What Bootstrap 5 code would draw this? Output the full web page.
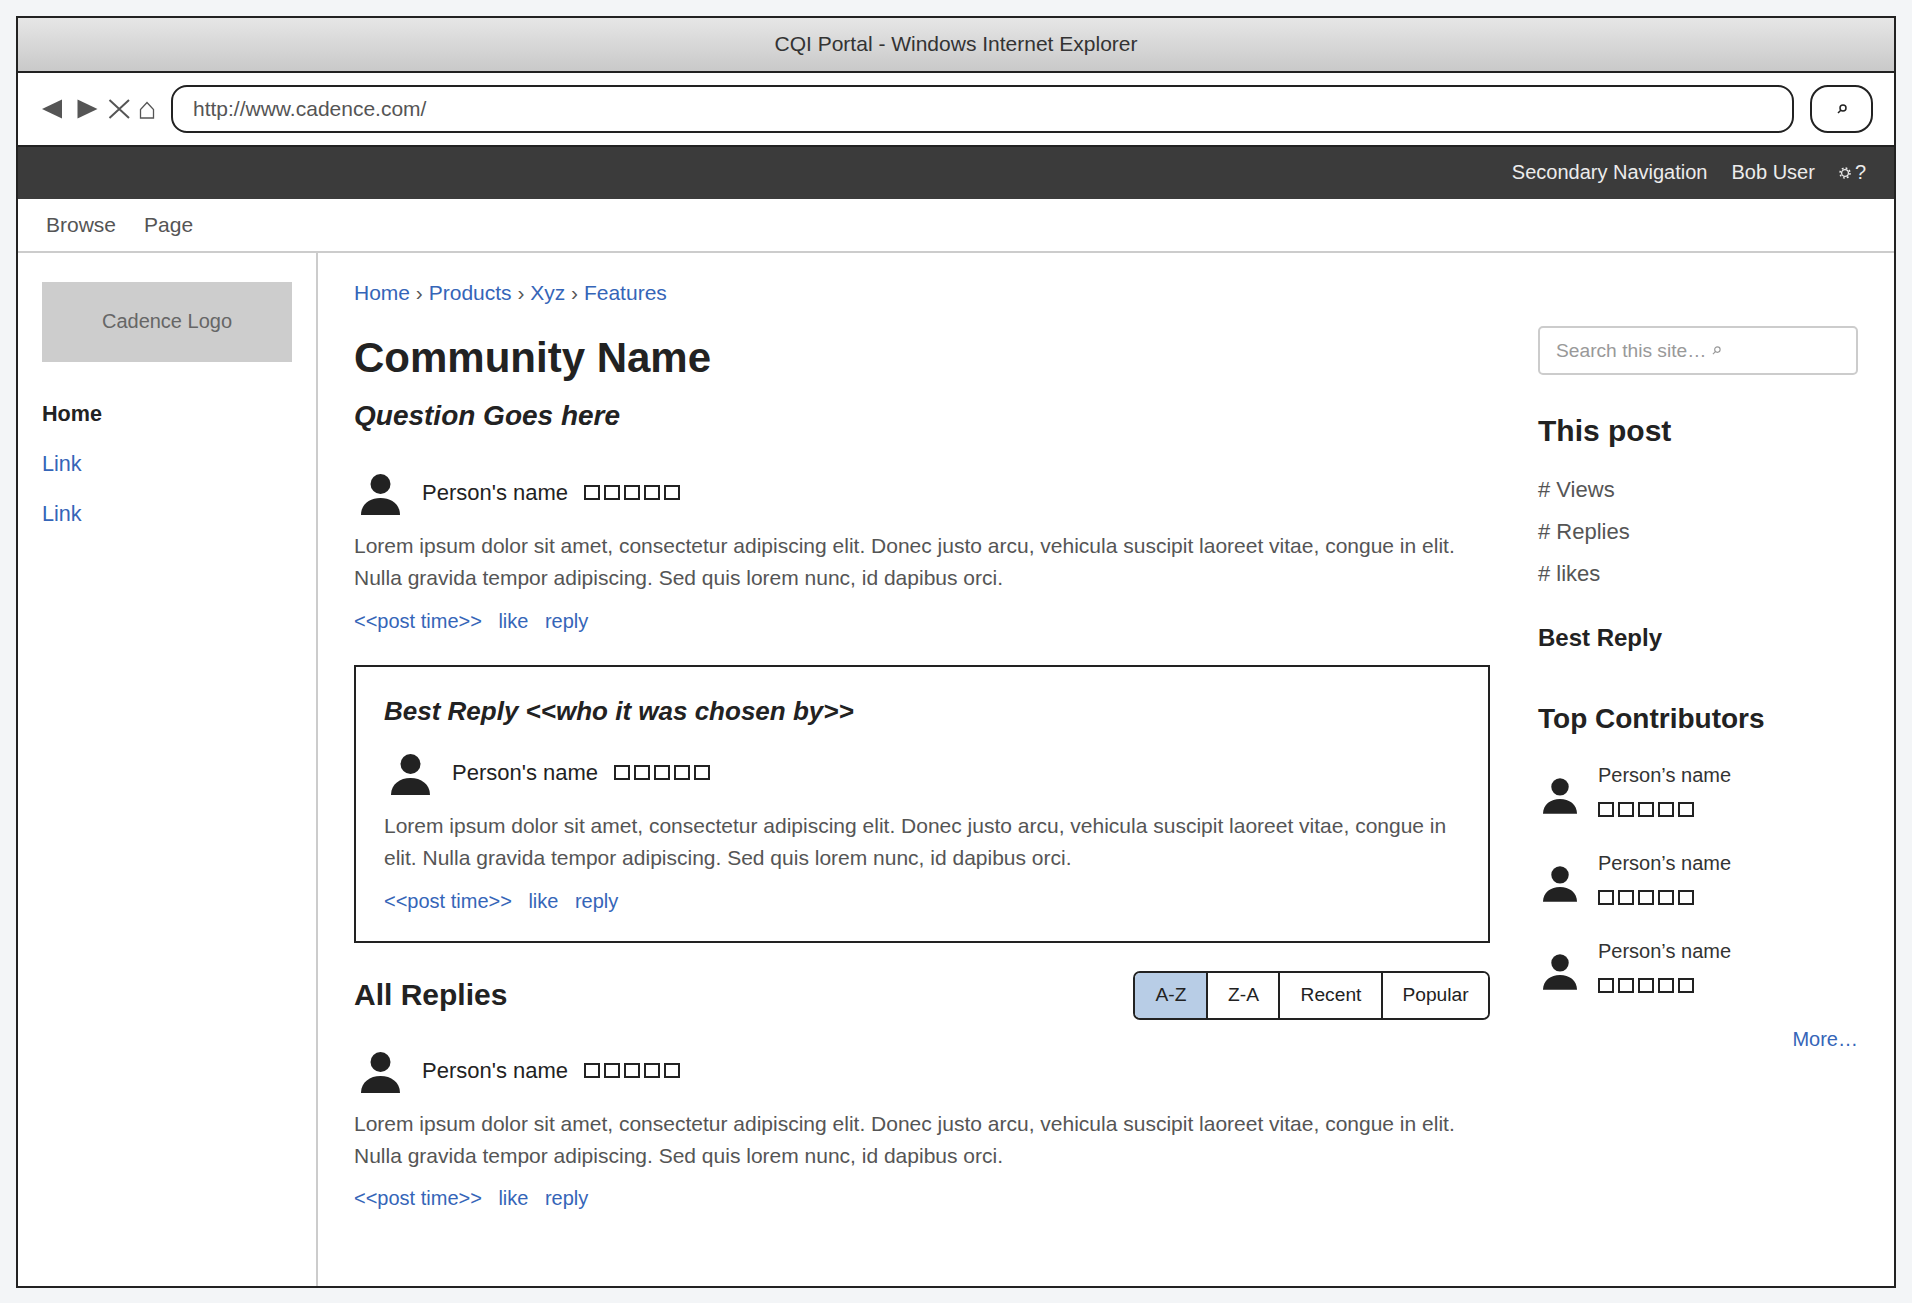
<!DOCTYPE html>
<html lang="en">
<head>
  <meta charset="UTF-8">
  <meta name="viewport" content="width=device-width, initial-scale=1.0">
  <title>CQI Portal</title>
  <link href="https://cdn.jsdelivr.net/npm/bootstrap@5.3.0/dist/css/bootstrap.min.css" rel="stylesheet">
  <style>
    body { background: #f3f5f7; font-family: "Liberation Sans", Arial, sans-serif; font-size: 21px; color: #555; padding: 16px 16px 0 16px; line-height: 31.5px; }
    a { color: #3565b8; text-decoration: none; }
    .wire-frame { height: 1272px; border: 2px solid #222; background: #fff; }
    .title-bar { height: 55px; border-bottom: 2px solid #222; background: linear-gradient(#e6e6e6, #c9c9c9); color: #333; padding-bottom: 2px; }
    .tool-bar { height: 74px; border-bottom: 2px solid #222; padding: 0 21px 0 24px; }
    .tool-icons { width: 129px; }
    .url-box { height: 48px; border: 2.5px solid #222; border-radius: 16px; padding-left: 20px; line-height: 43px; margin-top: -1px; }
    .go-btn { width: 63px; height: 48px; border: 2.5px solid #222; border-radius: 18px; margin-left: 16px; margin-top: -1px; }
    .dark-bar { height: 52px; background: #3b3b3b; color: #ececec; padding-right: 28px; font-size: 20px; padding-bottom: 1px; }
    .menu-bar { height: 54px; border-bottom: 2px solid #ccc; padding-left: 28px; gap: 28px; padding-bottom: 1px; }
    .menu-bar span { color: #555; }
    .left-col { width: 300px; border-right: 2px solid #ccc; padding: 29px 24px 0 24px; }
    .logo-box { height: 80px; background: #cdcdcd; color: #666; font-size: 20px; }
    .left-links { margin-top: 36px; font-size: 21.6px; }
    .left-links div { height: 50px; line-height: 31.5px; }
    .left-links b { color: #222; }
    .mid-col { width: 1136px; margin-left: 36px; padding-top: 24px; }
    .comm-title { font-size: 42px; font-weight: 700; line-height: 50px; margin: 24px 0 0 0; color: #222; }
    .q-title { font-size: 28px; font-weight: 700; font-style: italic; line-height: 34px; margin: 16px 0 0 0; color: #222; }
    .who-row { height: 40px; margin-top: 40px; color: #222; font-size: 22px; }
    .who-row svg { width: 39px; height: 41px; margin: 3px 22px 0 7px; fill: #222; }
    .boxes { display: inline-flex; gap: 4.5px; margin-left: 16px; }
    .boxes i { display: block; width: 15.5px; height: 15.5px; border: 2.5px solid #222; }
    .post-text { margin: 17px 0 0 0; line-height: 32px; }
    .post-links { margin-top: 12px; font-size: 20px; line-height: 30px; gap: 16.5px; }
    .mid-col > .post-links:last-child { margin-top: 11px; }
    .best-box { border: 2px solid #222; margin-top: 29px; padding: 27px 28px 24px 28px; height: 278px; }
    .best-box .q-title { margin: 0; font-size: 26px; }
    .best-box .who-row { margin-top: 25px; }
    .replies-head { margin-top: 28px; height: 49px; }
    .replies-head h2 { font-size: 30px; font-weight: 700; margin: 0; color: #222; }
    .sort-group { height: 49px; border: 2.5px solid #222; border-radius: 7px; overflow: hidden; }
    .sort-group .btn { border: 0; border-left: 2.5px solid #222; border-radius: 0; font-size: 19.2px; color: #222; padding: 0; background: #fff; line-height: 44px; }
    .sort-group .btn:first-child { border-left: 0; background: #b8cde6; width: 72px; }
    .sort-group .w-za { width: 73px; }
    .sort-group .w-rec { width: 104px; }
    .sort-group .w-pop { width: 107px; }
    .replies-head + .who-row { margin-top: 31px; }
    .right-col { width: 320px; margin-left: 48px; padding-top: 73px; }
    .site-search { height: 49px; border: 2.5px solid #ccc; border-radius: 5px; padding: 0 0 0 16px; color: #999; font-size: 19.2px; gap: 6px; }
    .side-h { font-size: 30px; font-weight: 700; color: #222; line-height: 36px; margin: 38px 0 0 0; }
    .side-h-top { font-size: 28px; margin-top: 48px; }
    .stat-list { margin-top: 25px; }
    .stat-line { height: 42px; font-size: 22px; line-height: 32px; }
    .side-best { font-size: 24px; font-weight: 700; color: #222; line-height: 30px; margin-top: 23px; }
    .contrib { height: 88px; color: #222; }
    .contrib svg { width: 34px; height: 36px; margin: 14px 21px 0 5px; fill: #222; }
    .contrib-name { font-size: 20px; line-height: 28px; color: #333; }
    .contrib .boxes { margin: 13px 0 0 0; display: flex; }
    .more-line { margin-top: 15px; font-size: 20px; }
  </style>
</head>

<body>
  <div class="wire-frame d-flex flex-column">
    <div class="title-bar d-flex align-items-center justify-content-center">CQI Portal - Windows Internet Explorer</div>

    <div class="tool-bar d-flex align-items-center">
      <div class="tool-icons d-flex">
        <svg width="129" height="24" viewBox="0 0 129 24">
          <path d="M0 12 L20 2.5 V21.5 Z" fill="#555"/>
          <path d="M35.5 2.5 L55.5 12 L35.5 21.5 Z" fill="#555"/>
          <path d="M67.500 3 L87 21 M87 3 L67.500 21" stroke="#555" stroke-width="2" fill="none"/>
          <path d="M98.5 21 V12.5 L105 5.500 L111.500 12.500 V21 Z" stroke="#555" stroke-width="1.300" fill="none"/>
        </svg>
      </div>
      <div class="url-box flex-grow-1">http://www.cadence.com/</div>
      <div class="go-btn d-flex align-items-center justify-content-center">
        <svg width="10" height="10" viewBox="0 0 10 10"><circle cx="6" cy="4" r="3" stroke="#222" stroke-width="1.500" fill="none"/><path d="M3.800 6.200 L1 9" stroke="#222" stroke-width="1.500"/></svg>
      </div>
    </div>

    <div class="dark-bar d-flex align-items-center justify-content-end">
      <span class="me-4">Secondary Navigation</span>
      <span class="me-4">Bob User</span>
      <svg width="12" height="12" viewBox="0 0 12 12" class="me-1"><circle cx="6" cy="6" r="3.400" stroke="#ececec" stroke-width="1.300" fill="none"/><circle cx="6" cy="6" r="5" stroke="#ececec" stroke-width="1.500" stroke-dasharray="1.800 2.130" fill="none"/></svg>
      <span>?</span>
    </div>

    <div class="menu-bar d-flex align-items-center"><span>Browse</span><span>Page</span></div>

    <div class="d-flex flex-grow-1">
      <div class="left-col">
        <div class="logo-box d-flex align-items-center justify-content-center">Cadence Logo</div>
        <div class="left-links">
          <div><b>Home</b></div>
          <div><a href="#">Link</a></div>
          <div><a href="#">Link</a></div>
        </div>
      </div>

      <div class="mid-col">
        <div><a href="#">Home</a> › <a href="#">Products</a> › <a href="#">Xyz</a> › <a href="#">Features</a></div>
        <h1 class="comm-title">Community Name</h1>
        <h2 class="q-title">Question Goes here</h2>

        <div class="who-row d-flex align-items-center">
          <svg viewBox="0 0 39 41"><circle cx="19.500" cy="10" r="10"/><path d="M0 41 C0 30 9 24 19.500 24 C30 24 39 30 39 41 Z"/></svg>
          <span>Person's name</span>
          <span class="boxes"><i></i><i></i><i></i><i></i><i></i></span>
        </div>
        <p class="post-text">Lorem ipsum dolor sit amet, consectetur adipiscing elit. Donec justo arcu, vehicula suscipit laoreet vitae, congue in elit. Nulla gravida tempor adipiscing. Sed quis lorem nunc, id dapibus orci.</p>
        <div class="post-links d-flex"><a href="#">&lt;&lt;post time&gt;&gt;</a><a href="#">like</a><a href="#">reply</a></div>

        <div class="best-box">
          <h2 class="q-title">Best Reply &lt;&lt;who it was chosen by&gt;&gt;</h2>
          <div class="who-row d-flex align-items-center">
            <svg viewBox="0 0 39 41"><circle cx="19.500" cy="10" r="10"/><path d="M0 41 C0 30 9 24 19.500 24 C30 24 39 30 39 41 Z"/></svg>
            <span>Person's name</span>
            <span class="boxes"><i></i><i></i><i></i><i></i><i></i></span>
          </div>
          <p class="post-text">Lorem ipsum dolor sit amet, consectetur adipiscing elit. Donec justo arcu, vehicula suscipit laoreet vitae, congue in elit. Nulla gravida tempor adipiscing. Sed quis lorem nunc, id dapibus orci.</p>
          <div class="post-links d-flex"><a href="#">&lt;&lt;post time&gt;&gt;</a><a href="#">like</a><a href="#">reply</a></div>
        </div>

        <div class="replies-head d-flex align-items-center justify-content-between">
          <h2>All Replies</h2>
          <div class="sort-group btn-group">
            <button class="btn">A-Z</button>
            <button class="btn w-za">Z-A</button>
            <button class="btn w-rec">Recent</button>
            <button class="btn w-pop">Popular</button>
          </div>
        </div>

        <div class="who-row d-flex align-items-center">
          <svg viewBox="0 0 39 41"><circle cx="19.500" cy="10" r="10"/><path d="M0 41 C0 30 9 24 19.500 24 C30 24 39 30 39 41 Z"/></svg>
          <span>Person's name</span>
          <span class="boxes"><i></i><i></i><i></i><i></i><i></i></span>
        </div>
        <p class="post-text">Lorem ipsum dolor sit amet, consectetur adipiscing elit. Donec justo arcu, vehicula suscipit laoreet vitae, congue in elit. Nulla gravida tempor adipiscing. Sed quis lorem nunc, id dapibus orci.</p>
        <div class="post-links d-flex"><a href="#">&lt;&lt;post time&gt;&gt;</a><a href="#">like</a><a href="#">reply</a></div>
      </div>

      <div class="right-col">
        <div class="site-search d-flex align-items-center">
          <span>Search this site…</span>
          <svg width="9" height="9" viewBox="0 0 10 10"><circle cx="6" cy="4" r="3" stroke="#999" stroke-width="1.300" fill="none"/><path d="M3.800 6.200 L1 9" stroke="#999" stroke-width="1.300"/></svg>
        </div>
        <h3 class="side-h">This post</h3>
        <div class="stat-list">
          <div class="stat-line"># Views</div>
          <div class="stat-line"># Replies</div>
          <div class="stat-line"># likes</div>
        </div>
        <div class="side-best">Best Reply</div>
        <h3 class="side-h side-h-top">Top Contributors</h3>
        <div class="mt-2">
          <div class="contrib d-flex align-items-center">
            <svg viewBox="0 0 39 41"><circle cx="19.500" cy="10" r="10"/><path d="M0 41 C0 30 9 24 19.500 24 C30 24 39 30 39 41 Z"/></svg>
            <div><div class="contrib-name">Person’s name</div><span class="boxes"><i></i><i></i><i></i><i></i><i></i></span></div>
          </div>
          <div class="contrib d-flex align-items-center">
            <svg viewBox="0 0 39 41"><circle cx="19.500" cy="10" r="10"/><path d="M0 41 C0 30 9 24 19.500 24 C30 24 39 30 39 41 Z"/></svg>
            <div><div class="contrib-name">Person’s name</div><span class="boxes"><i></i><i></i><i></i><i></i><i></i></span></div>
          </div>
          <div class="contrib d-flex align-items-center">
            <svg viewBox="0 0 39 41"><circle cx="19.500" cy="10" r="10"/><path d="M0 41 C0 30 9 24 19.500 24 C30 24 39 30 39 41 Z"/></svg>
            <div><div class="contrib-name">Person’s name</div><span class="boxes"><i></i><i></i><i></i><i></i><i></i></span></div>
          </div>
        </div>
        <div class="text-end more-line"><a href="#">More…</a></div>
      </div>
    </div>
  </div>

  <script src="https://cdn.jsdelivr.net/npm/bootstrap@5.3.0/dist/js/bootstrap.bundle.min.js"></script>
</body>
</html>
